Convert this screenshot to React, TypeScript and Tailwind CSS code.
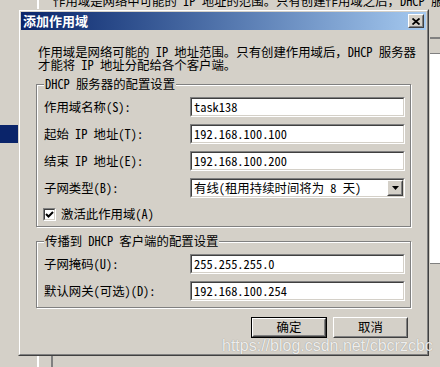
import React from "react";

const F = "font-['Noto_Sans_Mono_CJK_SC','Noto_Sans_CJK_SC',monospace]";

function Sunken({ children, className = "" }: { children?: React.ReactNode; className?: string }) {
  return (
    <div className={"border border-t-[#808080] border-l-[#808080] border-r-white border-b-white " + className}>
      <div className="h-full w-full border border-t-[#404040] border-l-[#404040] border-r-[#d4d0c8] border-b-[#d4d0c8] bg-white flex items-center">
        {children}
      </div>
    </div>
  );
}

function Raised({ children, className = "" }: { children?: React.ReactNode; className?: string }) {
  return (
    <div className={"border border-t-white border-l-white border-r-[#404040] border-b-[#404040] bg-[#d4d0c8] " + className}>
      <div className="h-full w-full border border-t-[#d4d0c8] border-l-[#d4d0c8] border-r-[#808080] border-b-[#808080] flex items-center justify-center">
        {children}
      </div>
    </div>
  );
}

function Field({ value }: { value: string }) {
  return (
    <Sunken className="w-[215px] h-[20px]">
      <span className="pl-[2px] whitespace-nowrap">{value}</span>
    </Sunken>
  );
}

function Row({ label, value }: { label: string; value: string }) {
  return (
    <div className="flex items-center h-[20px]">
      <span className="w-[146px] whitespace-nowrap">{label}</span>
      <Field value={value} />
    </div>
  );
}

export default function App() {
  return (
    <div className={"relative w-[440px] h-[367px] overflow-hidden bg-[#d4d0c8] text-black text-[12.4px] leading-[13px] " + F}>
      {/* background window */}
      <div className="absolute left-[53px] top-[-5px] whitespace-nowrap">
        作用域是网络中可能的 IP 地址的范围。只有创建作用域之后，DHCP 服务器
      </div>
      <div className="absolute left-[37px] top-0 h-full w-[2px] bg-white" />
      <div className="absolute left-[51px] top-[356px] bottom-0 w-[2px] bg-[#808080]" />
      <div className="absolute left-0 top-[125px] w-[18px] h-[18px] bg-[#0a246a]" />
      <div className="absolute left-[430px] top-[37px] w-[10px] h-[2px] bg-[#808080]" />
      <div className="absolute left-[430px] top-[53px] w-[10px] h-[210px] bg-white border-t border-[#808080]" />
      <div className="absolute left-[430px] top-[263px] w-[10px] h-px bg-[#808080]" />

      {/* dialog */}
      <div className="absolute left-[18px] top-[9px] w-[411px] h-[347px] border border-t-[#d4d0c8] border-l-[#d4d0c8] border-r-[#404040] border-b-[#404040]">
        <div className="h-full border border-t-white border-l-white border-r-[#808080] border-b-[#808080] p-px flex flex-col bg-[#d4d0c8]">
          <div className="h-[18px] flex items-center justify-between bg-linear-to-r from-[#0a246a] to-[#a6caf0]">
            <span className="pl-[2px] text-white font-bold text-[13px] leading-[18px] font-['Noto_Sans_CJK_SC',sans-serif]">添加作用域</span>
            <Raised className="w-[16px] h-[14px] mr-[2px]">
              <svg width="8" height="7" viewBox="0 0 8 7">
                <path d="M0.5 0.5 L7.5 6.5 M7.5 0.5 L0.5 6.5" stroke="#000" strokeWidth="1.8" />
              </svg>
            </Raised>
          </div>

          <div className="flex flex-col px-[15px]">
            <p className="mt-[16px] ml-[2px] whitespace-nowrap leading-[13px]">
              <span className="block">作用域是网络可能的 IP 地址范围。只有创建作用域后，DHCP 服务器</span>
              <span className="block">才能将 IP 地址分配给各个客户端。</span>
            </p>

            {/* group 1 */}
            <div className="relative mt-[12px] border border-[#808080] shadow-[inset_1px_1px_0_#fff,1px_1px_0_#fff] pt-[12px] pl-[7px] pr-[5px] pb-[5px] flex flex-col gap-[7px]">
              <span className="absolute left-[7px] top-[-7px] bg-[#d4d0c8] px-px whitespace-nowrap">DHCP 服务器的配置设置</span>
              <Row label="作用域名称(S):" value="task138" />
              <Row label="起始 IP 地址(T):" value="192.168.100.100" />
              <Row label="结束 IP 地址(E):" value="192.168.100.200" />
              <div className="flex items-center h-[20px]">
                <span className="w-[146px] whitespace-nowrap">子网类型(B):</span>
                <Sunken className="w-[215px] h-[20px]">
                  <span className="pl-[2px] flex-1 whitespace-nowrap">有线(租用持续时间将为 8 天)</span>
                  <Raised className="w-[16px] h-[16px]">
                    <svg width="7" height="4" viewBox="0 0 7 4">
                      <path d="M0 0 H7 L3.5 4 Z" fill="#000" />
                    </svg>
                  </Raised>
                </Sunken>
              </div>
              <div className="flex items-center h-[13px] mt-[3px] ml-[-1px]">
                <Sunken className="w-[13px] h-[13px]">
                  <svg width="9" height="9" viewBox="0 0 9 9" className="mx-auto">
                    <path d="M1 4 L3.5 6.5 L8 2" stroke="#000" strokeWidth="2" fill="none" />
                  </svg>
                </Sunken>
                <span className="ml-[5px] whitespace-nowrap">激活此作用域(A)</span>
              </div>
            </div>

            {/* group 2 */}
            <div className="relative mt-[14px] border border-[#808080] shadow-[inset_1px_1px_0_#fff,1px_1px_0_#fff] pt-[12px] pl-[7px] pr-[5px] pb-[6px] flex flex-col gap-[7px]">
              <span className="absolute left-[7px] top-[-7px] bg-[#d4d0c8] px-px whitespace-nowrap">传播到 DHCP 客户端的配置设置</span>
              <Row label="子网掩码(U):" value="255.255.255.0" />
              <Row label="默认网关(可选)(D):" value="192.168.100.254" />
            </div>

            {/* buttons */}
            <div className="mt-[9px] flex justify-end gap-[6px] pr-[3px]">
              <div className="border border-black">
                <Raised className="w-[74px] h-[19px]">
                  <span>确定</span>
                </Raised>
              </div>
              <Raised className="w-[75px] h-[21px]">
                <span>取消</span>
              </Raised>
            </div>
          </div>
        </div>
      </div>

      {/* watermark */}
      <div className="absolute left-[222px] top-[338px] text-[16px] leading-[16px] whitespace-nowrap text-white/85 font-['Liberation_Sans',Arial,sans-serif] [text-shadow:0_0_1px_rgba(0,0,0,0.4)]">
        https://blog.csdn.net/cbcrzcbc
      </div>
    </div>
  );
}
